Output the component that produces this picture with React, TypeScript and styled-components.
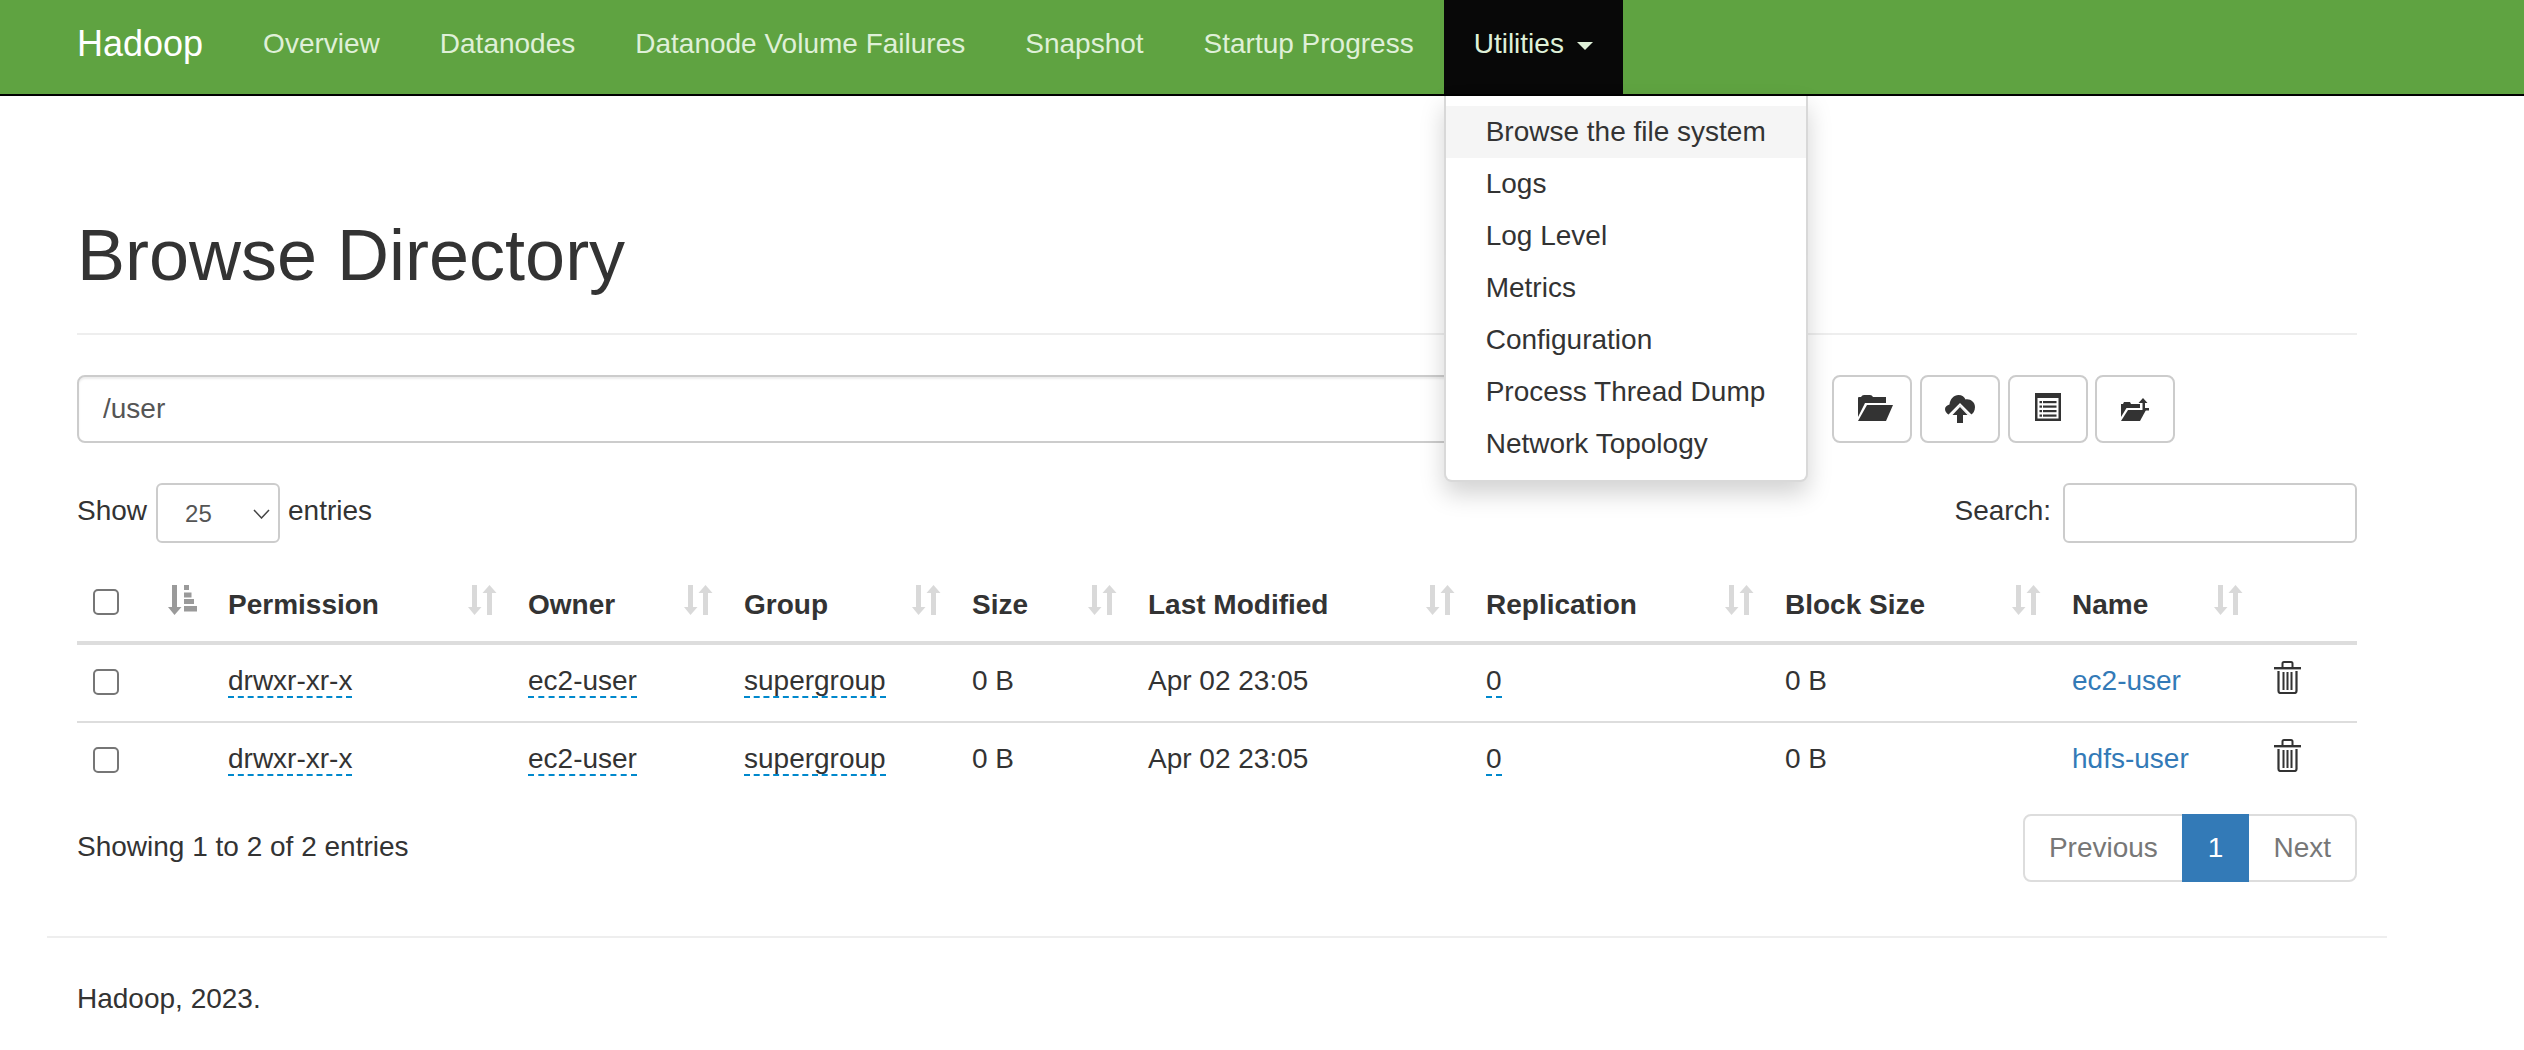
import styled, { createGlobalStyle } from "styled-components";

const GlobalStyle = createGlobalStyle`
  html, body {
    margin: 0;
    padding: 0;
    background: #fff;
  }
  body {
    font-family: "Liberation Sans", Arial, Helvetica, sans-serif;
    font-size: 28px;
    line-height: 40px;
    color: #333;
  }
  * {
    box-sizing: border-box;
  }
`;

const Navbar = styled.nav`
  background-color: #5fa341;
  border-bottom: 2px solid #000;
  height: 96px;
`;

const NavInner = styled.div`
  margin-left: 47px;
  width: 2340px;
  display: flex;
`;

const Brand = styled.a`
  color: #fff;
  font-size: 36px;
  padding: 24px 30px 30px;
`;

const NavList = styled.ul`
  display: flex;
  list-style: none;
  margin: 0;
  padding: 0;
`;

const NavItem = styled.li`
  position: relative;
`;

const NavLink = styled.a<{ $open?: boolean }>`
  display: block;
  height: 94px;
  padding: 24px 30px 30px;
  color: #dff0d8;
  background-color: ${(props) => (props.$open ? "#080808" : "transparent")};
`;

const Caret = styled.b`
  display: inline-block;
  margin-left: 13px;
  vertical-align: middle;
  border-top: 8px solid #dff0d8;
  border-left: 8px solid transparent;
  border-right: 8px solid transparent;
`;

const Dropdown = styled.ul`
  position: absolute;
  top: 96px;
  left: 0;
  z-index: 10;
  margin: 0;
  padding: 10px 0;
  list-style: none;
  white-space: nowrap;
  background: #fff;
  border: 2px solid rgba(0, 0, 0, 0.15);
  border-top: none;
  border-radius: 0 0 8px 8px;
  box-shadow: 0 12px 24px rgba(0, 0, 0, 0.175);
`;

const DropdownItem = styled.li<{ $active?: boolean }>`
  padding: 6px 40px;
  color: #333;
  background-color: ${(props) => (props.$active ? "#f5f5f5" : "transparent")};
`;

const Container = styled.div`
  margin-left: 47px;
  width: 2340px;
`;

const Content = styled.main`
  padding: 0 30px;
`;

const PageHeader = styled.div`
  padding: 120px 0 38px;
  border-bottom: 2px solid #eee;
  margin-bottom: 40px;
`;

const Title = styled.h1`
  margin: 0;
  font-size: 72px;
  line-height: 79px;
  font-weight: normal;
`;

const Toolbar = styled.div`
  display: flex;
  align-items: center;
  height: 68px;
  margin-bottom: 40px;
`;

const PathInput = styled.input`
  width: 1725px;
  height: 68px;
  margin-right: 30px;
  padding: 12px 24px;
  font: inherit;
  color: #555;
  border: 2px solid #ccc;
  border-radius: 8px;
  box-shadow: inset 0 2px 2px rgba(0, 0, 0, 0.075);
`;

const IconButtons = styled.div`
  display: flex;
  gap: 8px;
`;

const IconButton = styled.button`
  width: 80px;
  height: 68px;
  padding: 0;
  display: flex;
  align-items: center;
  justify-content: center;
  background: #fff;
  border: 2px solid #ccc;
  border-radius: 8px;

  &:last-child {
    margin-left: -1px;
  }
`;

const FolderSvg = styled.svg`
  margin: 0 0 2px 6px;
`;

const ListSvg = styled.svg`
  margin-bottom: 4px;
`;

const ControlsRow = styled.div`
  display: flex;
  justify-content: space-between;
  height: 60px;
  margin-bottom: 26px;
`;

const Control = styled.label`
  display: flex;
  align-items: center;
  gap: 8px;
`;

const ControlText = styled.span`
  margin-bottom: 4px;
`;

const SelectWrap = styled.span`
  position: relative;
  display: block;
  width: 124px;
  height: 60px;
  margin-left: 1px;
`;

const PageSelect = styled.select`
  appearance: none;
  width: 100%;
  height: 100%;
  padding: 0 0 0 27px;
  font-family: inherit;
  font-size: 24px;
  color: #555;
  background: #fff;
  border: 2px solid #ccc;
  border-radius: 6px;
`;

const SelectChevron = styled.svg`
  position: absolute;
  top: 26px;
  right: 10px;
  width: 17px;
  height: 10px;
  pointer-events: none;
`;

const SearchInput = styled.input`
  width: 294px;
  height: 60px;
  margin-left: 4px;
  font: inherit;
  border: 2px solid #ccc;
  border-radius: 6px;
`;

const FileTable = styled.table`
  width: 2280px;
  table-layout: fixed;
  border-collapse: separate;
  border-spacing: 0;
`;

const Col = styled.col<{ $w: number }>`
  width: ${(props) => props.$w}px;
`;

const HeadCell = styled.th`
  position: relative;
  height: 76px;
  padding: 16px;
  text-align: left;
  vertical-align: bottom;
  font-weight: bold;
  white-space: nowrap;
  border-bottom: 4px solid #ddd;
`;

const SortIcon = styled.svg`
  position: absolute;
  top: 16px;
  right: 15px;
  width: 29px;
  height: 30px;
`;

const Cell = styled.td<{ $last?: boolean }>`
  height: ${(props) => (props.$last ? "76px" : "78px")};
  padding: 16px;
  vertical-align: top;
  white-space: nowrap;
  border-bottom: ${(props) => (props.$last ? "none" : "2px solid #ddd")};
`;

const CheckBox = styled.input<{ $head?: boolean }>`
  appearance: none;
  display: block;
  width: 26px;
  height: 26px;
  margin: ${(props) => (props.$head ? "0 0 10px" : "8px 0 0")};
  background: #fff;
  border: 2px solid #767676;
  border-radius: 5px;
`;

const Editable = styled.span`
  border-bottom: 2px dashed #0088cc;
`;

const FileLink = styled.a`
  color: #337ab7;
`;

const TrashIcon = styled.svg`
  display: block;
  width: 27px;
  height: 33px;
`;

const TableFooter = styled.div`
  display: flex;
  justify-content: space-between;
  align-items: center;
  margin-top: 15px;
`;

const EntriesInfo = styled.span`
  margin-bottom: 2px;
`;

const Pagination = styled.div`
  display: flex;
  height: 68px;
`;

const PageButton = styled.a<{ $active?: boolean; $pos?: "first" | "last" }>`
  padding: 12px 24px;
  margin-left: ${(props) => (props.$pos === "first" ? "0" : "-2px")};
  color: ${(props) => (props.$active ? "#fff" : "#777")};
  background: ${(props) => (props.$active ? "#337ab7" : "#fff")};
  border: 2px solid ${(props) => (props.$active ? "#337ab7" : "#ddd")};
  border-radius: ${(props) =>
    props.$pos === "first"
      ? "8px 0 0 8px"
      : props.$pos === "last"
        ? "0 8px 8px 0"
        : "0"};
  position: ${(props) => (props.$active ? "relative" : "static")};
`;

const FooterRule = styled.hr`
  margin: 54px 0 41px;
  border: none;
  border-top: 2px solid #eee;
`;

const FooterText = styled.p`
  margin: 0 0 20px;
`;

const navItems = [
  "Overview",
  "Datanodes",
  "Datanode Volume Failures",
  "Snapshot",
  "Startup Progress",
];

const utilities = [
  "Browse the file system",
  "Logs",
  "Log Level",
  "Metrics",
  "Configuration",
  "Process Thread Dump",
  "Network Topology",
];

const columnWidths = [75, 60, 300, 216, 228, 176, 338, 299, 287, 202, 99];

const headers = [
  "Permission",
  "Owner",
  "Group",
  "Size",
  "Last Modified",
  "Replication",
  "Block Size",
  "Name",
];

const rows = [
  { name: "ec2-user" },
  { name: "hdfs-user" },
];

function FolderOpen() {
  return (
    <FolderSvg width="35" height="26" viewBox="0 0 35 26" fill="#333">
      <path d="M0 3Q0 2 1 2H3Q4 0 6 0H12Q14 0 15 2H28V8H7L0 22Z" />
      <path d="M9 10H35L28 26H0Z" />
    </FolderSvg>
  );
}

function CloudUpload() {
  return (
    <svg width="30" height="28" viewBox="0 0 30 28" fill="#333">
      <path d="M4 20C1 18 0 16 0 14 0 12 2 10 4.500 9.500 5 4 9 0 13.500 0 17 0 19.500 2 20.500 4.500 25 3.500 30 7 30 12 30 16 28 19 25 20.500L15 10.500Z" />
      <path d="M15 8L3 20 5.500 20 15 10.500 25 21 27 20Z" fill="#fff" />
      <path d="M15 12L22.500 20H18V28H12V20H7.500Z" />
    </svg>
  );
}

function ListAlt() {
  const lines = [8, 12.5, 17, 21.5];
  return (
    <ListSvg width="26" height="28" viewBox="0 0 26 28">
      <rect width="26" height="28" fill="#333" />
      <rect x="2.500" y="5" width="21" height="20.500" fill="#fff" />
      {lines.map((y) => (
        <g key={y} fill="#333">
          <rect x="4.500" y={y} width="2.500" height="2.200" />
          <rect x="8" y={y} width="13.500" height="2.200" />
        </g>
      ))}
    </ListSvg>
  );
}

function FolderUpload() {
  return (
    <svg width="28" height="23" viewBox="0 0 28 23" fill="#333">
      <path d="M0 6H2L3 4H9L10 6H19V10H5.500L0 19Z" />
      <path d="M7 12H25L19 23H0Z" />
      <path d="M22 0L26.500 5H24V10H28V12.500H21.500V5H17.500Z" />
    </svg>
  );
}

function SortBoth() {
  return (
    <SortIcon viewBox="0 0 29 30" fill="#d9d9d9">
      <path d="M4 0H9V22H13.500L6.500 30 0 22H4Z" />
      <path d="M19 30V8H14.500L21.500 0 28.500 8H24V30Z" />
    </SortIcon>
  );
}

function SortAttributes() {
  return (
    <SortIcon viewBox="0 0 29 30" fill="#9a9a9a">
      <path d="M4 0H9V22H13.500L6.500 30 0 22H4Z" />
      <rect x="16" y="0" width="5" height="5" />
      <rect x="16" y="7.500" width="7.500" height="5" />
      <rect x="16" y="14" width="10" height="5" />
      <rect x="16" y="21" width="13" height="5.500" />
    </SortIcon>
  );
}

function Trash() {
  return (
    <TrashIcon viewBox="0 0 27 33" fill="none" stroke="#333">
      <path d="M8.500 6V2.500Q8.500 1 10 1H17Q18.500 1 18.500 2.500V6" strokeWidth="2" />
      <path d="M0 7.200H27" strokeWidth="2.400" />
      <path d="M4.500 10V30Q4.500 32 6.500 32H20.500Q22.500 32 22.500 30V10" strokeWidth="2.200" />
      <path d="M9.500 11V29M13.500 11V29M17.500 11V29" strokeWidth="2" />
    </TrashIcon>
  );
}

export default function App() {
  return (
    <>
      <GlobalStyle />
      <Navbar>
        <NavInner>
          <Brand>Hadoop</Brand>
          <NavList>
            {navItems.map((item) => (
              <NavItem key={item}>
                <NavLink>{item}</NavLink>
              </NavItem>
            ))}
            <NavItem>
              <NavLink $open>
                Utilities
                <Caret />
              </NavLink>
              <Dropdown>
                {utilities.map((item, i) => (
                  <DropdownItem key={item} $active={i === 0}>
                    {item}
                  </DropdownItem>
                ))}
              </Dropdown>
            </NavItem>
          </NavList>
        </NavInner>
      </Navbar>
      <Container>
        <Content>
          <PageHeader>
            <Title>Browse Directory</Title>
          </PageHeader>
          <Toolbar>
            <PathInput defaultValue="/user" />
            <IconButtons>
              <IconButton>
                <FolderOpen />
              </IconButton>
              <IconButton>
                <CloudUpload />
              </IconButton>
              <IconButton>
                <ListAlt />
              </IconButton>
              <IconButton>
                <FolderUpload />
              </IconButton>
            </IconButtons>
          </Toolbar>
          <ControlsRow>
            <Control>
              <ControlText>Show</ControlText>
              <SelectWrap>
                <PageSelect defaultValue="25">
                  <option value="25">25</option>
                  <option value="50">50</option>
                  <option value="100">100</option>
                </PageSelect>
                <SelectChevron viewBox="0 0 17 10" fill="none" stroke="#444" strokeWidth="1.500">
                  <path d="M1 1L8.500 9 16 1" />
                </SelectChevron>
              </SelectWrap>
              <ControlText>entries</ControlText>
            </Control>
            <Control>
              <ControlText>Search:</ControlText>
              <SearchInput />
            </Control>
          </ControlsRow>
          <FileTable>
            <colgroup>
              {columnWidths.map((w, i) => (
                <Col key={i} $w={w} />
              ))}
            </colgroup>
            <thead>
              <tr>
                <HeadCell>
                  <CheckBox type="checkbox" $head />
                </HeadCell>
                <HeadCell>
                  <SortAttributes />
                </HeadCell>
                {headers.map((h) => (
                  <HeadCell key={h}>
                    {h}
                    <SortBoth />
                  </HeadCell>
                ))}
                <HeadCell />
              </tr>
            </thead>
            <tbody>
              {rows.map((row, i) => {
                const last = i === rows.length - 1;
                return (
                  <tr key={row.name}>
                    <Cell $last={last}>
                      <CheckBox type="checkbox" />
                    </Cell>
                    <Cell $last={last} />
                    <Cell $last={last}>
                      <Editable>drwxr-xr-x</Editable>
                    </Cell>
                    <Cell $last={last}>
                      <Editable>ec2-user</Editable>
                    </Cell>
                    <Cell $last={last}>
                      <Editable>supergroup</Editable>
                    </Cell>
                    <Cell $last={last}>0 B</Cell>
                    <Cell $last={last}>Apr 02 23:05</Cell>
                    <Cell $last={last}>
                      <Editable>0</Editable>
                    </Cell>
                    <Cell $last={last}>0 B</Cell>
                    <Cell $last={last}>
                      <FileLink>{row.name}</FileLink>
                    </Cell>
                    <Cell $last={last}>
                      <Trash />
                    </Cell>
                  </tr>
                );
              })}
            </tbody>
          </FileTable>
          <TableFooter>
            <EntriesInfo>Showing 1 to 2 of 2 entries</EntriesInfo>
            <Pagination>
              <PageButton $pos="first">Previous</PageButton>
              <PageButton $active>1</PageButton>
              <PageButton $pos="last">Next</PageButton>
            </Pagination>
          </TableFooter>
        </Content>
        <FooterRule />
        <Content>
          <FooterText>Hadoop, 2023.</FooterText>
        </Content>
      </Container>
    </>
  );
}
